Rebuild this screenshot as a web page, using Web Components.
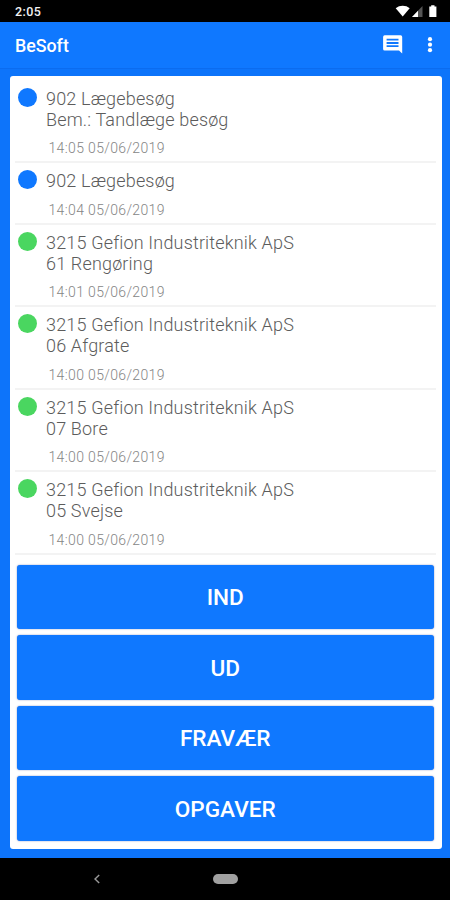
<!DOCTYPE html>
<html lang="da">
<head>
<meta charset="utf-8">
<title>BeSoft</title>
<style>
    body {
        margin: 0;
        background: #000;
        font-family: Roboto, "Liberation Sans", sans-serif;
    }
</style>
</head>
<body>

<besoft-app>
    <status-bar slot="top" time="2:05"></status-bar>
    <app-bar slot="top">BeSoft</app-bar>

    <log-entry time="14:05 05/06/2019">902 Lægebesøg<br>Bem.: Tandlæge besøg</log-entry>
    <log-entry time="14:04 05/06/2019">902 Lægebesøg</log-entry>
    <log-entry kind="job" time="14:01 05/06/2019">3215 Gefion Industriteknik ApS<br>61 Rengøring</log-entry>
    <log-entry kind="job" time="14:00 05/06/2019">3215 Gefion Industriteknik ApS<br>06 Afgrate</log-entry>
    <log-entry kind="job" time="14:00 05/06/2019">3215 Gefion Industriteknik ApS<br>07 Bore</log-entry>
    <log-entry kind="job" time="14:00 05/06/2019">3215 Gefion Industriteknik ApS<br>05 Svejse</log-entry>

    <action-button slot="actions">IND</action-button>
    <action-button slot="actions">UD</action-button>
    <action-button slot="actions">FRAVÆR</action-button>
    <action-button slot="actions">OPGAVER</action-button>

    <nav-bar slot="bottom"></nav-bar>
</besoft-app>

<script>
class BesoftAppComponent extends HTMLElement {
    constructor() {
        super();
        this.attachShadow({ mode: 'open' });
    }

    connectedCallback() {
        this.shadowRoot.innerHTML = `
            <style>

            :host {
                display: flex;
                flex-direction: column;
                height: 900px;
                overflow: hidden;
            }

            main {
                flex: 1;
                display: flex;
                box-sizing: border-box;
                padding: 7px 8.5px 9px 9.5px;
                background: #0d74fa;
            }

            .card {
                flex: 1;
                display: flex;
                flex-direction: column;
                justify-content: space-between;
                box-sizing: border-box;
                padding: 5px 7.5px 8.3px 7px;
                border-radius: 3px;
                background: #fff;
            }

            .entries {
                margin: 0 -2px 0 -1.5px;
            }

            .actions {
                display: flex;
                flex-direction: column;
                gap: 6px;
            }

            </style>

            <slot name="top"></slot>
            <main>
                <div class="card">
                    <div class="entries"><slot></slot></div>
                    <div class="actions"><slot name="actions"></slot></div>
                </div>
            </main>
            <slot name="bottom"></slot>
        `;
    }
}

class StatusBarComponent extends HTMLElement {
    constructor() {
        super();
        this.attachShadow({ mode: 'open' });
    }

    connectedCallback() {
        this.shadowRoot.innerHTML = `
            <style>

            :host {
                display: flex;
                align-items: center;
                justify-content: space-between;
                box-sizing: border-box;
                height: 22px;
                padding: 0 13px 0 15px;
                background: #000;
                color: #f2f2f2;
            }

            .time {
                font-size: 12.5px;
                font-weight: 500;
                letter-spacing: 0.4px;
            }

            svg {
                display: block;
            }

            </style>

            <span class="time"></span>
            <svg width="42" height="14" viewBox="0 0 42 14">
                <path d="M.7 4.2C4.6.9 10.8.9 14.7 4.2L7.7 12.5z" fill="#fff"/>
                <path d="M27.5 2v11H17z" fill="#555"/>
                <path d="M23 6.7V13h-6z" fill="#fff"/>
                <path d="M34.3 2.4h1.9V1.2h3.3v1.2h1.9V13h-7.1z" fill="#fff"/>
            </svg>
        `;

        this.shadowRoot.querySelector('.time').textContent = this.getAttribute('time');
    }
}

class AppBarComponent extends HTMLElement {
    constructor() {
        super();
        this.attachShadow({ mode: 'open' });
    }

    connectedCallback() {
        this.shadowRoot.innerHTML = `
            <style>

            :host {
                display: flex;
                align-items: center;
                justify-content: space-between;
                box-sizing: border-box;
                height: 47px;
                padding: 0 15px;
                border-bottom: 1px solid #0b6cf0;
                background: #0f78ff;
                color: #fff;
                font-size: 17.8px;
                font-weight: 500;
            }

            svg {
                display: block;
            }

            </style>

            <slot></slot>
            <svg width="52" height="20" viewBox="0 0 52 20">
                <path fill="#fff" fill-rule="evenodd" d="M1.7.3h15.9a1.6 1.6 0 0 1 1.6 1.6V18.6l-3.2-3H1.7a1.6 1.6 0 0 1-1.6-1.6V1.9A1.6 1.6 0 0 1 1.7.3zM3.6 3.8v1.8h11.9V3.8zm0 3.3v1.8h11.9V7.1zm0 3.2v1.8h11.9v-1.8z"/>
                <circle cx="47" cy="4.2" r="2.1" fill="#fff"/>
                <circle cx="47" cy="9.7" r="2.1" fill="#fff"/>
                <circle cx="47" cy="15.2" r="2.1" fill="#fff"/>
            </svg>
        `;
    }
}

class LogEntryComponent extends HTMLElement {
    constructor() {
        super();
        this.attachShadow({ mode: 'open' });
    }

    connectedCallback() {
        this.shadowRoot.innerHTML = `
            <style>

            :host {
                display: flex;
                align-items: flex-start;
                gap: 9px;
                padding: 7px 0 5px 3px;
                border-bottom: 2px solid #f3f3f3;
            }

            .dot {
                flex: none;
                width: 19px;
                height: 19px;
                border-radius: 50%;
                background: #0f78ff;
            }

            :host([kind="job"]) .dot {
                background: #4ad660;
            }

            .text {
                color: #5c5c5c;
                font-size: 18px;
                font-weight: 300;
                letter-spacing: 0.17px;
                line-height: 21.3px;
            }

            .time {
                margin: 9.9px 0 0 2.5px;
                color: #858585;
                font-size: 14px;
                font-weight: 300;
                letter-spacing: 0.35px;
                line-height: 16px;
            }

            </style>

            <div class="dot"></div>
            <div>
                <div class="text"><slot></slot></div>
                <div class="time"></div>
            </div>
        `;

        this.shadowRoot.querySelector('.time').textContent = this.getAttribute('time');
    }
}

class ActionButtonComponent extends HTMLElement {
    constructor() {
        super();
        this.attachShadow({ mode: 'open' });
    }

    connectedCallback() {
        this.shadowRoot.innerHTML = `
            <style>

            :host {
                display: block;
            }

            button {
                display: block;
                width: 100%;
                height: 64.5px;
                padding: 2px 0 0;
                border: 0;
                border-radius: 3px;
                background: #0f78ff;
                box-shadow: 0 0 1.5px rgba(40, 60, 150, 0.7);
                color: #fff;
                font: 500 22.6px Roboto, "Liberation Sans", sans-serif;
            }

            </style>

            <button><slot></slot></button>
        `;
    }
}

class NavBarComponent extends HTMLElement {
    constructor() {
        super();
        this.attachShadow({ mode: 'open' });
    }

    connectedCallback() {
        this.shadowRoot.innerHTML = `
            <style>

            :host {
                display: grid;
                grid-template-columns: 193px 1fr 193px;
                align-items: center;
                justify-items: center;
                height: 42px;
                background: #000;
            }

            .pill {
                width: 25px;
                height: 10px;
                border-radius: 5px;
                background: #a0a0a0;
            }

            </style>

            <svg width="8" height="10" viewBox="0 0 8 10">
                <path d="M6.2.9 2 5l4.2 4.1" fill="none" stroke="#999" stroke-width="1.4"/>
            </svg>
            <div class="pill"></div>
        `;
    }
}

customElements.define('besoft-app', BesoftAppComponent);
customElements.define('status-bar', StatusBarComponent);
customElements.define('app-bar', AppBarComponent);
customElements.define('log-entry', LogEntryComponent);
customElements.define('action-button', ActionButtonComponent);
customElements.define('nav-bar', NavBarComponent);
</script>
</body>
</html>
